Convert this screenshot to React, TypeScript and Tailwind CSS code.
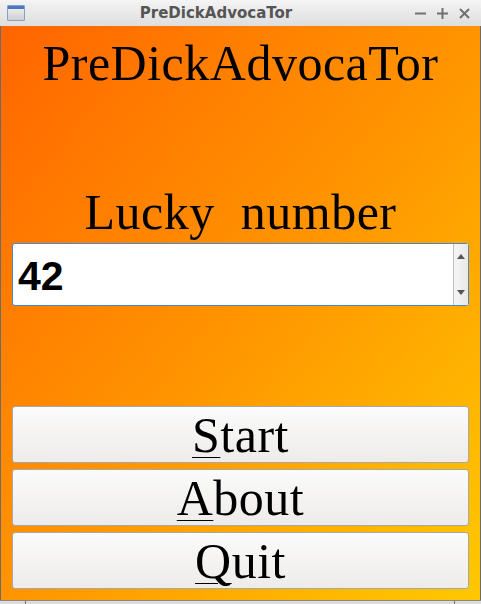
import React from 'react'

const serif = { fontFamily: '"Liberation Serif", serif' }

const MenuButton: React.FC<{ accel: string; rest: string }> = ({ accel, rest }) => (
  <button className="flex h-[57px] w-full items-center justify-center rounded-[3px] border border-[#a8a8a8] bg-gradient-to-b from-[#fbfbfb] to-[#eeecea] text-[50px] leading-[50px] tracking-[0.5px] text-black">
    <span style={serif}>
      <span className="underline decoration-1 underline-offset-[5px]">{accel}</span>
      {rest}
    </span>
  </button>
)

export default function App() {
  return (
    <div className="flex h-[604px] w-[481px] flex-col overflow-hidden bg-[#6b6b6b]">
      {/* Title bar */}
      <div className="flex h-[26px] items-center bg-gradient-to-b from-[#f4f4f4] to-[#dedede] pl-[7px] pr-[11px]">
        <div className="flex h-[16px] w-[18px] flex-col overflow-hidden rounded-[1px] border border-[#8aa0c0] bg-gradient-to-b from-[#f2f2f2] to-[#cfcfcf]">
          <div className="h-[3px] bg-[#4a78c0]" />
        </div>
        <div
          className="flex-1 pr-[8px] text-center text-[15px] font-bold leading-none text-[#555]"
          style={{ fontFamily: '"DejaVu Sans", sans-serif' }}
        >
          PreDickAdvocaTor
        </div>
        <div className="flex items-center gap-[11px] text-[#707070]">
          <svg width="11" height="11" viewBox="0 0 11 11">
            <path d="M0 5.5h11" stroke="currentColor" strokeWidth="2" />
          </svg>
          <svg width="11" height="11" viewBox="0 0 11 11">
            <path d="M0 5.5h11M5.5 0v11" stroke="currentColor" strokeWidth="2" />
          </svg>
          <svg width="11" height="11" viewBox="0 0 11 11">
            <path d="M1 1l9 9M10 1l-9 9" stroke="currentColor" strokeWidth="2" />
          </svg>
        </div>
      </div>

      {/* Content */}
      <div className="mx-[1px] flex h-[574px] flex-col bg-gradient-to-br from-[#ff6400] via-[#ff9400] to-[#ffc800] px-[11px]">
        <div style={serif} className="mt-[12px] text-center text-[50px] leading-[50px] tracking-[0.5px] text-black">
          PreDickAdvocaTor
        </div>
        <div style={serif} className="mt-[99px] whitespace-pre text-center text-[50px] leading-[50px] tracking-[0.5px] text-black">
          Lucky  number
        </div>

        <div className="mt-[6px] flex h-[63px] rounded-[3px] border border-[#3d8ad6] bg-white">
          <div
            className="flex flex-1 items-center pl-[5px] pt-[4px] text-[41px] font-bold text-black"
            style={{ fontFamily: '"Liberation Sans", sans-serif' }}
          >
            42
          </div>
          <div className="flex w-[15px] flex-col items-center justify-between border-l border-[#bdbdbd] bg-gradient-to-r from-[#f6f6f6] to-[#e8e8e8] py-[10px]">
            <svg width="8" height="5" viewBox="0 0 8 5">
              <path d="M0 5L4 0L8 5Z" fill="#555" />
            </svg>
            <svg width="8" height="5" viewBox="0 0 8 5">
              <path d="M0 0L4 5L8 0Z" fill="#555" />
            </svg>
          </div>
        </div>

        <div className="mt-[100px] flex flex-col gap-[6px]">
          <MenuButton accel="S" rest="tart" />
          <MenuButton accel="A" rest="bout" />
          <MenuButton accel="Q" rest="uit" />
        </div>
      </div>

      {/* Bottom frame */}
      <div className="flex h-[4px] border-t border-[#888] bg-[#dcdcdc]">
        <div className="w-[26px] border-r border-[#777]" />
        <div className="flex-1" />
        <div className="w-[27px] border-l border-[#777]" />
      </div>
    </div>
  )
}
